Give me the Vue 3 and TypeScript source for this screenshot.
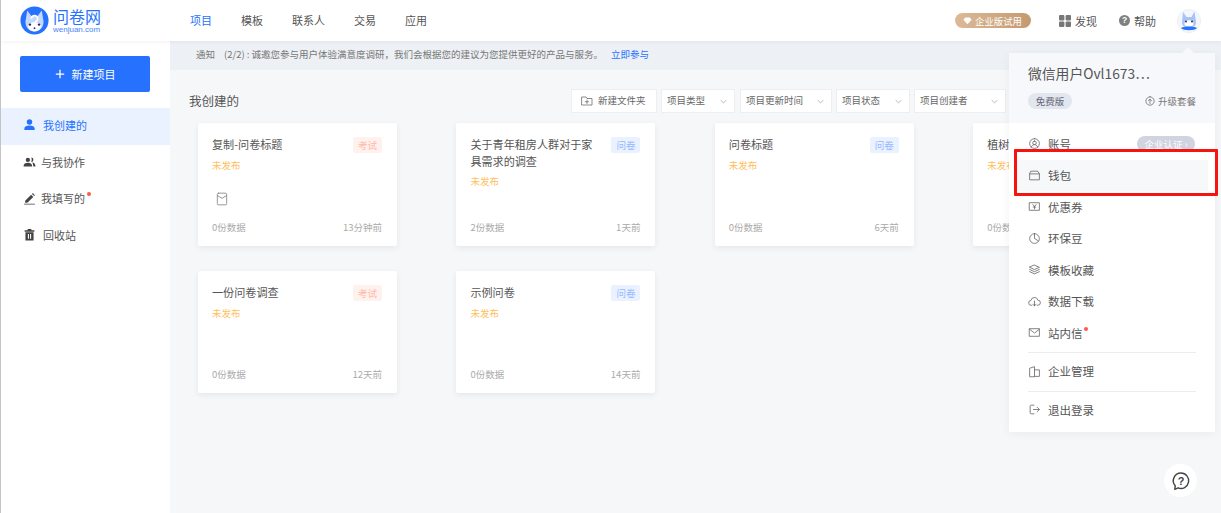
<script setup lang="ts">
const navItems = ["项目", "模板", "联系人", "交易", "应用"]

const sideItems = [
	{ label: "我创建的", icon: "M12 2.500a5 5 0 1 1 0 10 5 5 0 0 1 0-10zM2.500 22v-2.500c0-3.500 4-5.500 9.500-5.500s9.500 2 9.500 5.500V22z", active: true, dot: false, tight: false },
	{ label: "与我协作", icon: "M9 5a4 4 0 1 1 0 8 4 4 0 0 1 0-8zM1 21c0-4.500 3.500-6.500 8-6.500s8 2 8 6.500zM15 4.500a4 4 0 0 1 0 8.500c1.500-2.500 1.500-6 0-8.500zM17 14c3.500.5 6 2.500 6 7h-4c0-3-.7-5-2-7z", active: false, dot: false, tight: true },
	{ label: "我填写的", icon: "M4 16 15 5l4 4L8 20H4zM16.500 3.500l1.500-1.500 4 4-1.500 1.500zM2 21.500h20V23H2z", active: false, dot: true, tight: true },
	{ label: "回收站", icon: "M9 2h6l1 2h5v3H3V4h5zM4.500 8h15v15h-15zM9 11v9h2v-9zm4 0v9h2v-9z", active: false, dot: false, tight: false }
]

const filters = [
	{ label: "项目类型", wide: false },
	{ label: "项目更新时间", wide: true },
	{ label: "项目状态", wide: false },
	{ label: "项目创建者", wide: true }
]

const cards = [
	{ title: "复制-问卷标题", type: "考试", count: "0份数据", time: "13分钟前", box: true },
	{ title: "关于青年租房人群对于家具需求的调查", type: "问卷", count: "2份数据", time: "1天前", box: false },
	{ title: "问卷标题", type: "问卷", count: "0份数据", time: "6天前", box: false },
	{ title: "植树节问卷", type: "问卷", count: "0份数据", time: "7天前", box: false },
	{ title: "一份问卷调查", type: "考试", count: "0份数据", time: "12天前", box: false },
	{ title: "示例问卷", type: "问卷", count: "0份数据", time: "14天前", box: false }
]

const menuTop = [
	{ label: "账号", icon: "M12 3a9 9 0 1 1 0 18 9 9 0 0 1 0-18zM12 7.500a3.300 3.300 0 1 1 0 6.600 3.300 3.300 0 0 1 0-6.600zM6 19c.8-3 3-4.900 6-4.900s5.200 1.900 6 4.900", hover: false, dot: false },
	{ label: "钱包", icon: "M3 9v11h18V9l-3-5H6zM3 9h18", hover: true, dot: false },
	{ label: "优惠券", icon: "M3 5h18v14H3zM9 8.500l3 3.500 3-3.500M12 12v4.500M9.500 13h5", hover: false, dot: false },
	{ label: "环保豆", icon: "M12 3a9 9 0 1 1-.01 0zM12 3v9l6.500 4", hover: false, dot: false },
	{ label: "模板收藏", icon: "M12 4l9 4-9 4-9-4zM3 12l9 4 9-4M3 16l9 4 9-4", hover: false, dot: false },
	{ label: "数据下载", icon: "M7 19H6a4.500 4.500 0 0 1-.5-9 6.500 6.500 0 0 1 12.700-.5A4.700 4.700 0 0 1 18 19h-1M12 11v9M9 17l3 3 3-3", hover: false, dot: false },
	{ label: "站内信", icon: "M3 5h18v14H3zM3 6l9 7 9-7", hover: false, dot: true }
]

const companyIcon = "M3 21V6l9-3v18zM12 9h9v12h-9"
const logoutIcon = "M11 4H6a2 2 0 0 0-2 2v12a2 2 0 0 0 2 2h5M10 12h11M17 8l4 4-4 4"
</script>

<template>
	<div class="page">
		<header class="topbar">
			<div class="logo">
				<svg class="logo-mark" viewBox="0 0 32 32">
					<circle cx="16" cy="16" r="15.500" fill="#2672ff" />
					<path d="M8 5l4.500 6h7L24 5l2 12c0 7-4.500 11-10 11S6 24 6 17z" fill="#c4d8fb" />
					<ellipse cx="16" cy="23" rx="7" ry="5" fill="#fff" />
					<circle cx="11" cy="20.500" r="1.300" fill="#26304d" />
					<circle cx="21" cy="20.500" r="1.300" fill="#26304d" />
					<circle cx="16" cy="24.500" r="1" fill="#26304d" />
					<path d="M12.500 14a3.500 3.500 0 1 1 5 3.200L16 19.500" fill="none" stroke="#fff" stroke-width="1.800" />
				</svg>
				<div class="logo-text">
					<span class="logo-name">问卷网</span>
					<span class="logo-site">wenjuan.com</span>
				</div>
			</div>
			<nav class="nav">
				<a v-for="(item, i) in navItems" :key="item" :class="{ current: i === 0 }">{{ item }}</a>
			</nav>
			<div class="top-right">
				<span class="trial">
					<svg viewBox="0 0 12 12" class="trial-icon"><path d="M3 2h6l2.500 3L6 11 .5 5z" fill="#fff" /></svg>
					企业版试用
				</span>
				<span class="top-link discover">
					<svg viewBox="0 0 12 12" class="top-icon">
						<rect x="0" y="0" width="5.400" height="5.400" rx="1" />
						<rect x="6.600" y="0" width="5.400" height="5.400" rx="1" />
						<rect x="0" y="6.600" width="5.400" height="5.400" rx="1" />
						<rect x="6.600" y="6.600" width="5.400" height="5.400" rx="1" />
					</svg>
					发现
				</span>
				<span class="top-link help">
					<span class="help-icon">?</span>
					帮助
				</span>
				<svg class="avatar" viewBox="0 0 24 24">
					<circle cx="12" cy="12" r="11.700" fill="#f3f6fc" stroke="#e3e8f0" stroke-width=".5" />
					<path d="M6 3l3.500 5h5L17.500 2.500 19 13c0 4-3 6-7 6s-7-2-7-6z" fill="#a9c3f5" />
					<ellipse cx="12" cy="14.500" rx="4.500" ry="3.300" fill="#fff" />
					<circle cx="9" cy="12.500" r="1" fill="#26304d" />
					<circle cx="15" cy="12.500" r="1" fill="#26304d" />
					<path d="M4 19c3-2 13-2 16 0-2 3-14 3-16 0z" fill="#2672ff" />
				</svg>
			</div>
		</header>

		<div class="body">
			<aside class="side">
				<button class="create">
					<svg viewBox="0 0 12 12" class="plus"><path d="M6 1v10M1 6h10" stroke="#fff" stroke-width="1.500" /></svg>
					新建项目
				</button>
				<ul class="side-list">
					<li v-for="item in sideItems" :key="item.label" class="side-item" :class="{ active: item.active, tight: item.tight }">
						<svg viewBox="0 0 24 24" class="side-icon"><path :d="item.icon" /></svg>
						<span class="side-label">{{ item.label }}<i v-if="item.dot" class="dot side-dot"></i></span>
					</li>
				</ul>
			</aside>

			<main class="main">
				<div class="notice">
					<span class="notice-tag">通知</span>
					<span>(2/2) : 诚邀您参与用户体验满意度调研，我们会根据您的建议为您提供更好的产品与服务。</span>
					<a class="notice-link">立即参与</a>
				</div>

				<div class="toolbar">
					<h2 class="heading">我创建的</h2>
					<div class="tools">
						<button class="new-folder">
							<svg viewBox="0 0 24 24" class="line-icon folder-icon"><path d="M2 4h8l2 3h10v13H2zM12 10v7M8.500 13.500h7" /></svg>
							<span class="tool-text">新建文件夹</span>
						</button>
						<div v-for="f in filters" :key="f.label" class="filter" :class="{ wide: f.wide }">
							<span class="tool-text">{{ f.label }}</span>
							<svg viewBox="0 0 10 6" class="chevron"><path d="M1 1l4 4 4-4" /></svg>
						</div>
					</div>
				</div>

				<div class="cards">
					<article v-for="card in cards" :key="card.title" class="card">
						<div class="card-head">
							<h3 class="card-title">{{ card.title }}</h3>
							<span class="tag" :class="card.type === '考试' ? 'tag-exam' : 'tag-form'">{{ card.type }}</span>
						</div>
						<div class="state">未发布</div>
						<svg v-if="card.box" viewBox="0 0 24 24" class="line-icon box-icon"><path d="M6 2h12a2 2 0 0 1 2 2v16a2 2 0 0 1-2 2H6a2 2 0 0 1-2-2V4a2 2 0 0 1 2-2zM4 6l8 5 8-5" /></svg>
						<div class="card-foot">
							<span>{{ card.count }}</span>
							<span>{{ card.time }}</span>
						</div>
					</article>
				</div>
			</main>
		</div>

		<!-- 用户下拉菜单 -->
		<div class="menu">
			<i class="menu-arrow"></i>
			<div class="menu-head">
				<div class="user-name">微信用户Ovl1673…</div>
				<div class="user-plan">
					<span class="plan-tag">免费版</span>
					<span class="upgrade">
						<svg viewBox="0 0 24 24" class="line-icon upgrade-icon"><path d="M12 2a10 10 0 1 1-.01 0zM12 18V8M8 11.500 12 7.500l4 4" /></svg>
						升级套餐
					</span>
				</div>
			</div>
			<ul class="menu-list">
				<li v-for="item in menuTop" :key="item.label" class="menu-item" :class="{ hover: item.hover }">
					<svg viewBox="0 0 24 24" class="line-icon menu-icon"><path :d="item.icon" /></svg>
					<span class="menu-label">{{ item.label }}<i v-if="item.dot" class="dot menu-dot"></i></span>
					<span v-if="item.label === '账号'" class="verify">企业认证 ›</span>
				</li>
			</ul>
			<div class="menu-line"></div>
			<div class="menu-item">
				<svg viewBox="0 0 24 24" class="line-icon menu-icon"><path :d="companyIcon" /></svg>
				<span class="menu-label">企业管理</span>
			</div>
			<div class="menu-line low"></div>
			<div class="menu-item">
				<svg viewBox="0 0 24 24" class="line-icon menu-icon"><path :d="logoutIcon" /></svg>
				<span class="menu-label">退出登录</span>
			</div>
		</div>

		<div class="mark-box"></div>

		<div class="float-help">
			<svg viewBox="0 0 24 24" class="float-icon">
				<path d="M12 2.500a9.200 9.200 0 1 1-3.500 17.700L4.500 22l.6-4.200A9.200 9.200 0 0 1 12 2.500z" fill="none" stroke="#444" stroke-width="1.700" stroke-linejoin="round" />
				<text x="12" y="16.500" text-anchor="middle" class="float-q">?</text>
			</svg>
		</div>
	</div>
</template>

<style>
html, body {
	margin: 0;
	background: #fff;
	overflow: hidden;
}
</style>

<style scoped>
.page {
	position: relative;
	width: 1221px;
	height: 513px;
	overflow: hidden;
	display: flex;
	flex-direction: column;
	border-left: 1px solid #c4c4c4;
	box-sizing: border-box;
	font-family: "Noto Sans CJK SC", "Liberation Sans", sans-serif;
	font-size: 11px;
	color: #555;
	background: #f6f7f9;
}

.topbar {
	position: relative;
	z-index: 2;
	flex: none;
	height: 41px;
	display: flex;
	align-items: center;
	background: #fff;
	box-shadow: 0 1px 4px rgba(0, 0, 0, 0.06);
}

.logo {
	display: flex;
	align-items: center;
	margin-left: 19px;
	width: 170px;
}

.logo-mark {
	width: 29px;
	height: 29px;
	flex: none;
}

.logo-text {
	display: flex;
	flex-direction: column;
	margin-left: 4px;
	color: #2672ff;
	line-height: 1;
}

.logo-name {
	font-size: 16px;
	line-height: 17px;
}

.logo-site {
	font-family: "Liberation Sans", sans-serif;
	font-size: 8px;
	line-height: 9px;
	color: #4a86f7;
}

.nav {
	display: flex;
	gap: 29px;
	margin-bottom: 2px;
	font-size: 11px;
	color: #555;
}

.nav .current {
	color: #2672ff;
}

.top-right {
	margin-left: auto;
	display: flex;
	align-items: center;
	margin-right: 20px;
}

.trial {
	display: flex;
	align-items: center;
	gap: 3px;
	box-sizing: border-box;
	width: 76px;
	height: 15px;
	padding-left: 8px;
	border-radius: 8px;
	background: linear-gradient(90deg, #dcb997, #c49a70);
	color: #fff;
	font-size: 9.400px;
}

.trial-icon {
	width: 9px;
	height: 9px;
}

.top-link {
	display: flex;
	align-items: center;
	font-size: 11px;
	color: #555;
}

.discover {
	margin-left: 28px;
	gap: 4px;
}

.top-icon {
	width: 12px;
	height: 12px;
	fill: #777;
}

.help {
	margin-left: 22px;
	gap: 4px;
}

.help-icon {
	width: 11px;
	height: 11px;
	border-radius: 50%;
	background: #808080;
	color: #fff;
	font-size: 8.500px;
	font-weight: 700;
	line-height: 11px;
	text-align: center;
	font-family: "Liberation Sans", sans-serif;
}

.avatar {
	width: 24px;
	height: 24px;
	margin-left: 21px;
}

.body {
	flex: 1;
	display: flex;
	min-height: 0;
}

.side {
	flex: none;
	width: 169px;
	background: #fff;
	padding-top: 15px;
}

.create {
	display: flex;
	align-items: center;
	justify-content: center;
	gap: 7px;
	width: 130px;
	height: 36px;
	margin-left: 19px;
	border: 0;
	border-radius: 2px;
	background: #2672ff;
	color: #fff;
	font-family: inherit;
	font-size: 11px;
}

.plus {
	width: 10px;
	height: 10px;
}

.side-list {
	list-style: none;
	margin: 16px 0 0;
	padding: 0;
}

.side-item {
	display: flex;
	align-items: center;
	box-sizing: border-box;
	height: 36.700px;
	padding: 0 0 3px 22px;
	gap: 7px;
	color: #555;
}

.side-item.tight {
	gap: 5px;
}

.side-item.active {
	background: #ebf2ff;
	color: #2672ff;
}

.side-icon {
	width: 13px;
	height: 13px;
	fill: #444;
}

.active .side-icon {
	fill: #2672ff;
}

.side-label {
	position: relative;
}

.dot {
	position: absolute;
	width: 4px;
	height: 4px;
	border-radius: 50%;
	background: #ff5a4a;
}

.side-dot {
	right: -6px;
	top: 2px;
}

.main {
	flex: 1;
	min-width: 0;
	display: flex;
	flex-direction: column;
}

.notice {
	flex: none;
	box-sizing: border-box;
	height: 29px;
	display: flex;
	align-items: center;
	padding: 0 0 3px 26px;
	background: #edf0f4;
	color: #777;
	font-size: 9.500px;
}

.notice-tag {
	margin-right: 9px;
}

.notice-link {
	margin-left: 8px;
	color: #2672ff;
}

.toolbar {
	flex: none;
	display: flex;
	align-items: center;
	height: 24px;
	margin-top: 19px;
	padding-left: 19px;
}

.heading {
	margin: 0 0 2px;
	font-size: 12.500px;
	font-weight: 400;
	color: #555;
}

.tools {
	display: flex;
	gap: 4px;
	margin-left: 332px;
}

.new-folder,
.filter {
	display: flex;
	align-items: center;
	box-sizing: border-box;
	height: 24px;
	background: #fff;
	border: 1px solid #edeef1;
	color: #666;
	font-family: inherit;
	font-size: 9.500px;
}

.tool-text {
	margin-bottom: 2px;
}

.new-folder {
	width: 86px;
	padding: 0 0 0 9px;
	gap: 5px;
}

.filter {
	justify-content: space-between;
	width: 74px;
	padding: 0 7px 0 5px;
}

.filter:nth-child(3) {
	margin-left: 1px;
}

.filter.wide {
	width: 92px;
}

.line-icon {
	fill: none;
	stroke: #666;
	stroke-width: 1.500;
	stroke-linejoin: round;
	stroke-linecap: round;
}

.folder-icon {
	width: 12px;
	height: 12px;
}

.chevron {
	width: 7px;
	height: 5px;
	fill: none;
	stroke: #999;
	stroke-width: 1;
}

.cards {
	display: grid;
	grid-template-columns: repeat(4, 199px);
	gap: 25px 59.400px;
	margin-top: 10px;
	padding-left: 28px;
}

.card {
	display: flex;
	flex-direction: column;
	box-sizing: border-box;
	height: 122.500px;
	padding: 13px 15px 12px 14px;
	background: #fff;
	border-radius: 2px;
	box-shadow: 0 2px 6px rgba(0, 0, 0, 0.07);
}

.card-head {
	display: flex;
	justify-content: space-between;
	align-items: flex-start;
	gap: 14px;
}

.card-title {
	margin: 0;
	font-size: 11.100px;
	font-weight: 400;
	line-height: 16.500px;
	color: #555;
}

.tag {
	flex: none;
	width: 29px;
	height: 16px;
	margin-top: 1px;
	line-height: 16px;
	text-align: center;
	border-radius: 2px;
	font-size: 9.500px;
}

.tag-exam {
	background: #fff2ee;
	color: #ffb8a5;
}

.tag-form {
	background: #ebf2ff;
	color: #93b8ff;
}

.state {
	margin-top: 5px;
	font-size: 9.500px;
	line-height: 14px;
	color: #ffc05c;
}

.box-icon {
	width: 14px;
	height: 14px;
	margin: 20px 0 0 3px;
	stroke: #888;
}

.card-foot {
	margin-top: auto;
	display: flex;
	justify-content: space-between;
	font-size: 9.500px;
	line-height: 14px;
	color: #aaa;
}

/* 下拉菜单 */
.menu {
	position: absolute;
	z-index: 3;
	left: 1008px;
	top: 53px;
	width: 206px;
	height: 379px;
	background: #fff;
	box-shadow: 0 2px 10px rgba(0, 0, 0, 0.05);
}

.menu-arrow {
	position: absolute;
	right: 20px;
	top: -6px;
	width: 0;
	height: 0;
	border-left: 7px solid transparent;
	border-right: 7px solid transparent;
	border-bottom: 7px solid #f7f8fb;
}

.menu-head {
	box-sizing: border-box;
	height: 70px;
	padding: 10px 19px 0;
	background: #f7f8fb;
}

.user-name {
	font-size: 13.800px;
	line-height: 21px;
	color: #555;
}

.user-plan {
	display: flex;
	justify-content: space-between;
	align-items: center;
	margin-top: 9px;
}

.plan-tag {
	width: 44px;
	height: 16px;
	line-height: 16px;
	text-align: center;
	border-radius: 8px;
	background: #e2e6ee;
	color: #667;
	font-size: 9.500px;
}

.upgrade {
	display: flex;
	align-items: center;
	gap: 3px;
	font-size: 9.500px;
	color: #777;
}

.upgrade-icon {
	width: 10px;
	height: 10px;
	stroke-width: 1.800;
}

.menu-list {
	list-style: none;
	margin: 5px 0 0;
	padding: 0;
}

.menu-item {
	display: flex;
	align-items: center;
	height: 31.500px;
	margin: 0 7px;
	padding: 0 12px;
	gap: 7px;
	color: #555;
	font-size: 11.500px;
}

.menu-item.hover {
	background: #f7f8fa;
}

.menu-icon {
	width: 13px;
	height: 13px;
	flex: none;
}

.menu-label {
	position: relative;
}

.menu-dot {
	right: -5px;
	top: 2px;
}

.verify {
	margin: 0 1px 0 auto;
	width: 58px;
	height: 16px;
	line-height: 16px;
	text-align: center;
	border-radius: 8px;
	background: #d0d3e0;
	color: #fff;
	font-size: 9.500px;
}

.menu-line {
	height: 1px;
	margin: 3px 19px 3px;
	background: #ececec;
}

.menu-line.low {
	margin: 4px 19px 2px;
}

.mark-box {
	position: absolute;
	z-index: 4;
	left: 1013px;
	top: 149px;
	width: 204px;
	height: 47px;
	box-sizing: border-box;
	border: 3px solid #f5140f;
	border-radius: 1px;
}

.float-help {
	position: absolute;
	z-index: 3;
	left: 1163px;
	top: 464px;
	width: 33px;
	height: 33px;
	display: flex;
	align-items: center;
	justify-content: center;
	border-radius: 50%;
	background: #fff;
}

.float-icon {
	width: 20px;
	height: 20px;
}

.float-q {
	font-family: "Liberation Sans", sans-serif;
	font-size: 13px;
	font-weight: 700;
	fill: #444;
}
</style>
